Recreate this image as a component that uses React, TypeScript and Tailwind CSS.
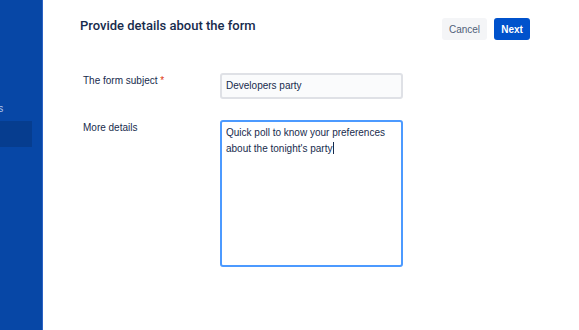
export default function App() {
  const font = { fontFamily: "'Liberation Sans', Arial, sans-serif" };
  return (
    <div className="flex h-[330px] w-[579px] overflow-hidden bg-white" style={font}>
      {/* collapsed sidebar */}
      <aside className="flex w-[43px] shrink-0 flex-col overflow-hidden border-r border-[#2c63c4] bg-[#0747a6]">
        <div className="mt-[102px] h-[14px] whitespace-nowrap text-[10px] leading-[14px] text-[#b3c7ea]">
          <span className="ml-[-25px]">Forms</span>
        </div>
        <div className="mt-[5px] h-[26px] w-[32px] bg-[#063d8f]" />
      </aside>

      <main className="flex-1 pl-[37px] pr-[49px] text-[#172b4d]">
        <header className="flex items-start justify-between pt-[17px]">
          <h1
            className="text-[13px] font-medium leading-[18px]"
            style={{ fontFamily: "Roboto, 'Liberation Sans', sans-serif" }}
          >
            Provide details about the form
          </h1>
          <div className="flex gap-[7px] pt-[1px]">
            <button className="h-[22px] w-[45px] rounded-[3px] bg-[#f4f5f7] text-[10px] text-[#505f79]">Cancel</button>
            <button className="h-[22px] w-[36px] rounded-[3px] bg-[#0052cc] text-[10px] font-bold text-white">Next</button>
          </div>
        </header>

        <form className="mt-[33px] flex flex-col gap-[21px] pl-[3px] text-[10px]">
          <div className="flex items-start">
            <label className="w-[137px] pt-[1px] leading-[14px]">
              The form subject <span className="text-[#de350b]">*</span>
            </label>
            <div className="flex h-[26px] w-[183px] items-center rounded-[3px] border-2 border-[#dfe1e6] bg-[#fafbfc] px-[4px] leading-[14px]">
              Developers party
            </div>
          </div>
          <div className="flex items-start">
            <label className="w-[137px] pt-[1px] leading-[14px]">More details</label>
            <div className="h-[147px] w-[183px] rounded-[3px] border-2 border-[#4c9aff] bg-white px-[4px] pt-[4px] leading-[14px]">
              Quick poll to know your preferences
              <br />
              about the tonight's party
              <span className="ml-[1px] inline-block h-[12px] w-px translate-y-[2px] bg-[#172b4d]" />
            </div>
          </div>
        </form>
      </main>
    </div>
  );
}
